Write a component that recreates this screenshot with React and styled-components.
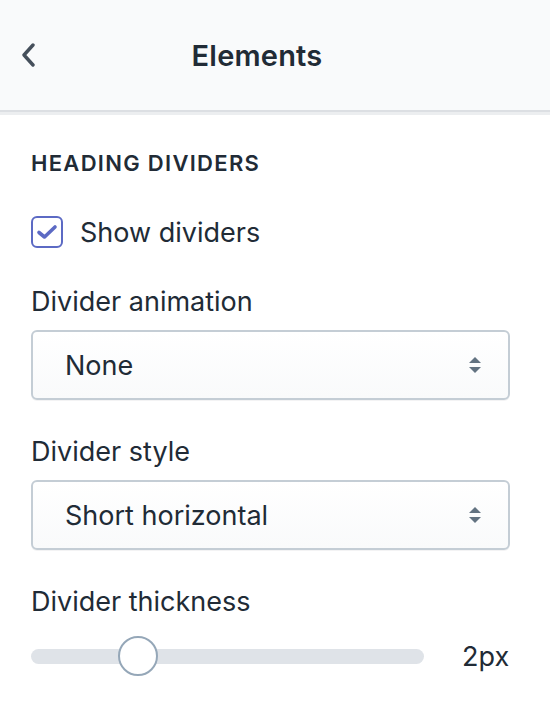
import styled, { createGlobalStyle } from "styled-components";

const GlobalStyle = createGlobalStyle`
  html, body {
    margin: 0;
    padding: 0;
    background: #ffffff;
  }
  body {
    font-family: Inter, "Noto Sans", "Liberation Sans", sans-serif;
    color: #212b36;
    -webkit-font-smoothing: antialiased;
  }
`;

const Panel = styled.div`
  width: 550px;
  height: 724px;
  background: #fff;
  overflow: hidden;
`;

const Header = styled.header`
  height: 110px;
  background: #f9fafb;
  border-bottom: 2px solid #dcdfe3;
  box-shadow: 0 3px 0 #eceef0;
  display: grid;
  grid-template-columns: 60px 1fr 96px;
  align-items: center;
`;

const BackButton = styled.button`
  border: none;
  background: none;
  padding: 0 0 0 21px;
  height: 40px;
  display: flex;
  align-items: center;
  cursor: pointer;
`;

const Title = styled.h1`
  margin: 0;
  text-align: center;
  font-size: 29px;
  font-weight: 600;
  color: #212b36;
  letter-spacing: 0.2px;
`;

const Body = styled.div`
  padding: 37px 40px 0 31px;
  display: flex;
  flex-direction: column;
`;

const SectionTitle = styled.h2`
  margin: 0 0 39px;
  font-size: 22px;
  line-height: 28px;
  font-weight: 600;
  text-transform: uppercase;
  letter-spacing: 1.3px;
  color: #212b36;
`;

const CheckRow = styled.label`
  display: flex;
  align-items: center;
  gap: 17px;
  height: 32px;
  font-size: 27px;
  color: #212b36;
  margin-bottom: 38px;
`;

const Box = styled.span`
  box-sizing: border-box;
  width: 32px;
  height: 32px;
  border: 2.5px solid #5c6ac4;
  border-radius: 6px;
  display: flex;
  align-items: center;
  justify-content: center;
  background: #fff;
`;

const Field = styled.div`
  display: flex;
  flex-direction: column;
  margin-bottom: ${({ $gap }) => $gap}px;
`;

const Label = styled.div`
  font-size: 27px;
  line-height: 32px;
  color: #212b36;
  margin-bottom: ${({ $gap }) => $gap ?? 12}px;
`;

const Select = styled.div`
  height: 66px;
  border: 2px solid #c4cdd5;
  border-radius: 6px;
  background: linear-gradient(#ffffff, #f9fafb);
  box-shadow: 0 1px 0 rgba(22, 29, 37, 0.05);
  display: flex;
  align-items: center;
  justify-content: space-between;
  padding: 0 26px 0 32px;
  font-size: 27px;
  color: #212b36;
`;

const SliderRow = styled.div`
  display: flex;
  align-items: center;
  height: 44px;
  gap: 38px;
`;

const Track = styled.div`
  position: relative;
  width: 393px;
  height: 15px;
  border-radius: 8px;
  background: #dfe3e8;
`;

const Thumb = styled.span`
  position: absolute;
  top: 50%;
  width: 36px;
  height: 36px;
  border-radius: 50%;
  border: 2px solid #95a7b8;
  background: #fff;
  transform: translate(-50%, -50%);
`;

const Value = styled.span`
  font-size: 27px;
  color: #212b36;
`;

const Chevron = () => (
  <svg width="14" height="24" viewBox="0 0 14 24">
    <path d="M12 2 L3 12 L12 22" fill="none" stroke="#454f5b" strokeWidth="3.4" strokeLinecap="round" strokeLinejoin="round" />
  </svg>
);

const Check = () => (
  <svg width="22" height="16" viewBox="0 0 22 16">
    <path d="M3 8.5 L8.5 13 L19 3" fill="none" stroke="#5c6ac4" strokeWidth="3.6" strokeLinecap="round" strokeLinejoin="round" />
  </svg>
);

const Arrows = () => (
  <svg width="14" height="20" viewBox="0 0 14 20">
    <path d="M7 2 L13 8 L1 8 Z" fill="#637381" />
    <path d="M7 18 L13 12 L1 12 Z" fill="#637381" />
  </svg>
);

export default function App() {
  const thickness = 2;
  const pct = ((thickness - 1) / 3) * 100 - 6.2;
  return (
    <Panel>
      <GlobalStyle />
      <Header>
        <BackButton aria-label="Back">
          <Chevron />
        </BackButton>
        <Title>Elements</Title>
        <span />
      </Header>
      <Body>
        <SectionTitle>Heading dividers</SectionTitle>
        <CheckRow>
          <Box>
            <Check />
          </Box>
          Show dividers
        </CheckRow>
        <Field $gap={36}>
          <Label>Divider animation</Label>
          <Select>
            None
            <Arrows />
          </Select>
        </Field>
        <Field $gap={36}>
          <Label>Divider style</Label>
          <Select>
            Short horizontal
            <Arrows />
          </Select>
        </Field>
        <Field $gap={0}>
          <Label $gap={16}>Divider thickness</Label>
          <SliderRow>
            <Track>
              <Thumb style={{ left: `${pct}%` }} />
            </Track>
            <Value>{thickness}px</Value>
          </SliderRow>
        </Field>
      </Body>
    </Panel>
  );
}
